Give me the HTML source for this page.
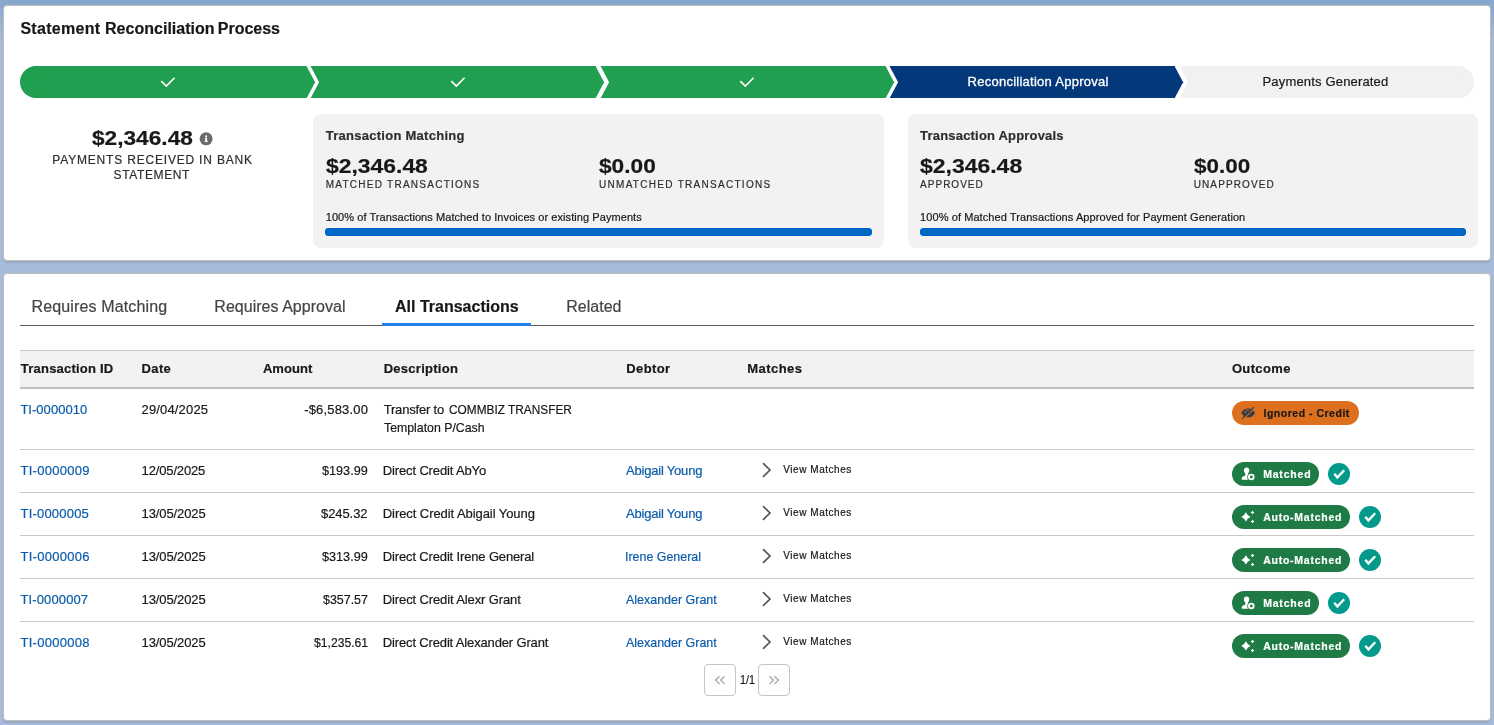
<!DOCTYPE html>
<html lang="en">
<head>
<meta charset="utf-8">
<title>Statement Reconciliation Process</title>
<style>
*{box-sizing:border-box;margin:0;padding:0}
html,body{width:1494px;height:725px;overflow:hidden}
body{font-family:"Liberation Sans",sans-serif;font-size:13px;color:#181818;background:linear-gradient(180deg,#86a6cd 0px,#a7bcdb 40px,#a7bcdb 100%);position:relative}
.card{position:absolute;left:3px;width:1488px;background:#fff;border:1px solid #bdbdbd;border-radius:4px;box-shadow:0 2px 2px 0 rgba(0,0,0,.1)}
.a{position:absolute}
.txt{position:absolute;left:0;top:0;width:1494px;height:725px;will-change:transform}
.x{position:absolute;white-space:nowrap;-webkit-text-stroke:.2px}
/* path */
.path{position:absolute;left:20px;top:66px;width:1454px;height:32px;display:flex}
.pi{position:relative;flex:1 1 0%;height:32px;margin-left:6px;margin-right:7px}
.pi:before,.pi:after{content:"";position:absolute;left:-4px;right:-5px;background:inherit}
.pi:before{top:0;height:17px;transform:skew(28deg)}
.pi:after{bottom:0;height:16px;transform:skew(-28deg)}
.pi:first-child{margin-left:0;padding-left:10px;border-radius:16px 0 0 16px}
.pi:first-child:before,.pi:first-child:after{left:18px}
.pi:last-child{margin-right:0;padding-right:10px;border-radius:0 16px 16px 0}
.pi:last-child:before,.pi:last-child:after{right:18px}
.pi.done{background:#219f50}
.pi.cur{background:#03387a}
.pi.todo{background:#f1f1f1}
.box{position:absolute;top:114px;height:134px;background:#f2f2f2;border-radius:8px}
.bar{position:absolute;top:228px;height:8px;border-radius:4px;background:#0069c8;box-shadow:inset 0 0 0 1px #0061c2,0 0 0 1px #fcf8f2}
.hl{position:absolute;left:20px;width:1454px;height:1px;background:#c9c9c9}
.badge{position:absolute;left:1232px;height:24px;border-radius:12px}
.ok{position:absolute;width:22px;height:22px;border-radius:11px;background:#049a8b}
.pg{position:absolute;top:664px;width:32px;height:32px;border:1px solid #c4c4c4;border-radius:4px;background:#fff}
svg{position:absolute;overflow:visible}
</style>
</head>
<body>

<div class="card" style="top:5px;height:256px"></div>
<div class="card" style="top:273px;height:448px"></div>

<!-- ============ process card ============ -->
<div class="path">
  <div class="pi done"></div><div class="pi done"></div><div class="pi done"></div><div class="pi cur"></div><div class="pi todo"></div>
</div>
<svg class="a" style="left:0;top:0" width="1494" height="110">
  <path d="M161.3 81.1 166.3 86.1 174.6 77.8M451.3 81.1 456.3 86.1 464.6 77.8M740.3 81.1 745.3 86.1 753.6 77.8" fill="none" stroke="#fff" stroke-width="1.6"/>
</svg>

<svg class="a" style="left:199px;top:132px" width="15" height="14" viewBox="0 0 15 14"><circle cx="7.1" cy="6.8" r="6.5" fill="#6b6b6b"/><circle cx="7.2" cy="4.2" r="1.05" fill="#fff"/><path d="M5.7 5.8H8.1V9.3H8.9V10.1H5.5V9.3H6.3V6.6H5.7Z" fill="#fff"/></svg>

<div class="box" style="left:313px;width:571px"></div>
<div class="box" style="left:908px;width:570px"></div>
<div class="bar" style="left:325px;width:547px"></div>
<div class="bar" style="left:920px;width:546px"></div>
<div class="txt">
<span class="x" style="left:20.4px;top:20px;font-size:16px;line-height:17px;color:#181818;font-weight:bold;letter-spacing:0.3px;">Statement</span>
<span class="x" style="left:105.0px;top:20px;font-size:16px;line-height:17px;color:#181818;font-weight:bold;letter-spacing:0.02px;">Reconciliation</span>
<span class="x" style="left:217.8px;top:20px;font-size:16px;line-height:17px;color:#181818;font-weight:bold;letter-spacing:-0.01px;">Process</span>
<span class="x" style="left:967.5px;top:74px;font-size:13px;line-height:15px;color:#fff;letter-spacing:0.26px;-webkit-text-stroke:.3px #fff;">Reconciliation Approval</span>
<span class="x" style="left:1262.5px;top:74px;font-size:13px;line-height:15px;color:#181818;letter-spacing:0.17px;">Payments Generated</span>
<span class="x" style="left:92.3px;top:126px;font-size:20.5px;line-height:23px;color:#181818;font-weight:bold;transform:scaleX(1.1058);transform-origin:0 0;">$2,346.48</span>
<span class="x" style="left:52.3px;top:153px;font-size:12px;line-height:14px;color:#2e2e2e;letter-spacing:0.81px;">PAYMENTS RECEIVED IN BANK</span>
<span class="x" style="left:113.6px;top:168px;font-size:12px;line-height:14px;color:#2e2e2e;letter-spacing:0.62px;">STATEMENT</span>
<span class="x" style="left:325.7px;top:128px;font-size:13px;line-height:15px;color:#2e2e2e;font-weight:bold;letter-spacing:0.27px;">Transaction Matching</span>
<span class="x" style="left:325.7px;top:154px;font-size:20.5px;line-height:23px;color:#181818;font-weight:bold;transform:scaleX(1.1168);transform-origin:0 0;">$2,346.48</span>
<span class="x" style="left:325.7px;top:179px;font-size:10px;line-height:11px;color:#2e2e2e;letter-spacing:1.26px;">MATCHED TRANSACTIONS</span>
<span class="x" style="left:599.0px;top:154px;font-size:20.5px;line-height:23px;color:#181818;font-weight:bold;transform:scaleX(1.1061);transform-origin:0 0;">$0.00</span>
<span class="x" style="left:599.0px;top:179px;font-size:10px;line-height:11px;color:#2e2e2e;letter-spacing:1.29px;">UNMATCHED TRANSACTIONS</span>
<span class="x" style="left:325.7px;top:211px;font-size:11px;line-height:12px;color:#181818;letter-spacing:0.07px;">100% of Transactions Matched to Invoices or existing Payments</span>
<span class="x" style="left:920.1px;top:128px;font-size:13px;line-height:15px;color:#2e2e2e;font-weight:bold;letter-spacing:0.19px;">Transaction Approvals</span>
<span class="x" style="left:920.1px;top:154px;font-size:20.5px;line-height:23px;color:#181818;font-weight:bold;transform:scaleX(1.1201);transform-origin:0 0;">$2,346.48</span>
<span class="x" style="left:920.1px;top:179px;font-size:10px;line-height:11px;color:#2e2e2e;letter-spacing:1.01px;">APPROVED</span>
<span class="x" style="left:1193.7px;top:154px;font-size:20.5px;line-height:23px;color:#181818;font-weight:bold;transform:scaleX(1.0943);transform-origin:0 0;">$0.00</span>
<span class="x" style="left:1193.7px;top:179px;font-size:10px;line-height:11px;color:#2e2e2e;letter-spacing:1.11px;">UNAPPROVED</span>
<span class="x" style="left:920.1px;top:211px;font-size:11px;line-height:12px;color:#181818;letter-spacing:0.08px;">100% of Matched Transactions Approved for Payment Generation</span>
</div>

<!-- ============ transactions card ============ -->
<div class="a" style="left:20px;top:325px;width:1454px;height:1px;background:#5c5c5c"></div>
<div class="a" style="left:382px;top:323px;width:149px;height:3px;background:#2680ed"></div>

<div class="a" style="left:20px;top:350px;width:1454px;height:39px;background:#f2f2f2;border-top:1px solid #c9c9c9;border-bottom:2px solid #c0c0c0"></div>
<div class="hl" style="top:449px"></div>
<div class="hl" style="top:492px"></div>
<div class="hl" style="top:535px"></div>
<div class="hl" style="top:578px"></div>
<div class="hl" style="top:621px"></div>

<div class="badge" style="top:401px;width:127px;background:#dd701f"></div>
<svg class="a" style="left:1241px;top:406px" width="15" height="14" viewBox="0 0 15 14"><path d="M0.2 6.7C2 3.7 4.5 2.5 7.2 2.5S12.3 3.8 14 6.9C12.3 10.1 9.9 11.3 7.2 11.3S2 10 0.2 6.7Z" fill="#333e48"/><path d="M4.2 7.2A2.8 2.8 0 0 1 7.8 4.2" fill="none" stroke="#dd701f" stroke-width="1"/><path d="M2.1 13.4 13.4 2.3" stroke="#dd701f" stroke-width="1.1"/><path d="M1.3 12.6 12.6 1.5" stroke="#333e48" stroke-width="1.2" stroke-linecap="round"/></svg>
<div class="badge" style="top:462px;width:87px;background:#1e7b45"></div>
<svg class="a" style="left:1241px;top:467px" width="15" height="14" viewBox="0 0 15 14"><path d="M5.6 0.6C7.3 0.6 8.3 1.9 8.3 3.5C8.3 4.9 7.6 6 6.9 6.5V7.3L8 7.9C7.2 8.6 6.7 9.6 6.7 10.7C6.7 11.5 6.9 12.2 7.3 12.8H0.8V11.3C0.8 10.4 1.3 9.9 2.2 9.5L4.3 8.5V6.5C3.6 6 2.9 4.9 2.9 3.5C2.9 1.9 3.9 0.6 5.6 0.6Z" fill="#fff"/><circle cx="10.3" cy="10" r="4" fill="#1e7b45"/><circle cx="10.3" cy="10" r="2.35" fill="none" stroke="#fff" stroke-width="1.9"/></svg>
<div class="ok" style="left:1328px;top:463px"></div>
<svg class="a" style="left:1328px;top:463px" width="22" height="22" viewBox="-11 -11 22 22"><path d="M-4.7-.3-1.6 3.4 5.2-3.8" fill="none" stroke="#fff" stroke-width="2.3"/></svg>
<svg class="a" style="left:762px;top:462px" width="10" height="16" viewBox="0 0 10 16"><path d="M1.5 1.6 8 8 1.5 14.4" fill="none" stroke="#505050" stroke-width="1.6" stroke-linecap="round"/></svg>
<div class="badge" style="top:505px;width:118px;background:#1e7b45"></div>
<svg class="a" style="left:0;top:0" width="1494" height="725"><path d="M1241.30 516.90Q1244.52 515.52 1245.90 512.30Q1247.28 515.52 1250.50 516.90Q1247.28 518.28 1245.90 521.50Q1244.52 518.28 1241.30 516.90ZM1250.50 512.50Q1252.00 512.00 1252.50 510.50Q1253.00 512.00 1254.50 512.50Q1253.00 513.00 1252.50 514.50Q1252.00 513.00 1250.50 512.50ZM1250.50 521.50Q1252.00 521.00 1252.50 519.50Q1253.00 521.00 1254.50 521.50Q1253.00 522.00 1252.50 523.50Q1252.00 522.00 1250.50 521.50Z" fill="#fff"/></svg>
<div class="ok" style="left:1359px;top:506px"></div>
<svg class="a" style="left:1359px;top:506px" width="22" height="22" viewBox="-11 -11 22 22"><path d="M-4.7-.3-1.6 3.4 5.2-3.8" fill="none" stroke="#fff" stroke-width="2.3"/></svg>
<svg class="a" style="left:762px;top:505px" width="10" height="16" viewBox="0 0 10 16"><path d="M1.5 1.6 8 8 1.5 14.4" fill="none" stroke="#505050" stroke-width="1.6" stroke-linecap="round"/></svg>
<div class="badge" style="top:548px;width:118px;background:#1e7b45"></div>
<svg class="a" style="left:0;top:0" width="1494" height="725"><path d="M1241.30 559.90Q1244.52 558.52 1245.90 555.30Q1247.28 558.52 1250.50 559.90Q1247.28 561.28 1245.90 564.50Q1244.52 561.28 1241.30 559.90ZM1250.50 555.50Q1252.00 555.00 1252.50 553.50Q1253.00 555.00 1254.50 555.50Q1253.00 556.00 1252.50 557.50Q1252.00 556.00 1250.50 555.50ZM1250.50 564.50Q1252.00 564.00 1252.50 562.50Q1253.00 564.00 1254.50 564.50Q1253.00 565.00 1252.50 566.50Q1252.00 565.00 1250.50 564.50Z" fill="#fff"/></svg>
<div class="ok" style="left:1359px;top:549px"></div>
<svg class="a" style="left:1359px;top:549px" width="22" height="22" viewBox="-11 -11 22 22"><path d="M-4.7-.3-1.6 3.4 5.2-3.8" fill="none" stroke="#fff" stroke-width="2.3"/></svg>
<svg class="a" style="left:762px;top:548px" width="10" height="16" viewBox="0 0 10 16"><path d="M1.5 1.6 8 8 1.5 14.4" fill="none" stroke="#505050" stroke-width="1.6" stroke-linecap="round"/></svg>
<div class="badge" style="top:591px;width:87px;background:#1e7b45"></div>
<svg class="a" style="left:1241px;top:596px" width="15" height="14" viewBox="0 0 15 14"><path d="M5.6 0.6C7.3 0.6 8.3 1.9 8.3 3.5C8.3 4.9 7.6 6 6.9 6.5V7.3L8 7.9C7.2 8.6 6.7 9.6 6.7 10.7C6.7 11.5 6.9 12.2 7.3 12.8H0.8V11.3C0.8 10.4 1.3 9.9 2.2 9.5L4.3 8.5V6.5C3.6 6 2.9 4.9 2.9 3.5C2.9 1.9 3.9 0.6 5.6 0.6Z" fill="#fff"/><circle cx="10.3" cy="10" r="4" fill="#1e7b45"/><circle cx="10.3" cy="10" r="2.35" fill="none" stroke="#fff" stroke-width="1.9"/></svg>
<div class="ok" style="left:1328px;top:592px"></div>
<svg class="a" style="left:1328px;top:592px" width="22" height="22" viewBox="-11 -11 22 22"><path d="M-4.7-.3-1.6 3.4 5.2-3.8" fill="none" stroke="#fff" stroke-width="2.3"/></svg>
<svg class="a" style="left:762px;top:591px" width="10" height="16" viewBox="0 0 10 16"><path d="M1.5 1.6 8 8 1.5 14.4" fill="none" stroke="#505050" stroke-width="1.6" stroke-linecap="round"/></svg>
<div class="badge" style="top:634px;width:118px;background:#1e7b45"></div>
<svg class="a" style="left:0;top:0" width="1494" height="725"><path d="M1241.30 645.90Q1244.52 644.52 1245.90 641.30Q1247.28 644.52 1250.50 645.90Q1247.28 647.28 1245.90 650.50Q1244.52 647.28 1241.30 645.90ZM1250.50 641.50Q1252.00 641.00 1252.50 639.50Q1253.00 641.00 1254.50 641.50Q1253.00 642.00 1252.50 643.50Q1252.00 642.00 1250.50 641.50ZM1250.50 650.50Q1252.00 650.00 1252.50 648.50Q1253.00 650.00 1254.50 650.50Q1253.00 651.00 1252.50 652.50Q1252.00 651.00 1250.50 650.50Z" fill="#fff"/></svg>
<div class="ok" style="left:1359px;top:635px"></div>
<svg class="a" style="left:1359px;top:635px" width="22" height="22" viewBox="-11 -11 22 22"><path d="M-4.7-.3-1.6 3.4 5.2-3.8" fill="none" stroke="#fff" stroke-width="2.3"/></svg>
<svg class="a" style="left:762px;top:634px" width="10" height="16" viewBox="0 0 10 16"><path d="M1.5 1.6 8 8 1.5 14.4" fill="none" stroke="#505050" stroke-width="1.6" stroke-linecap="round"/></svg>
<div class="txt">
<span class="x" style="left:31.5px;top:298px;font-size:16px;line-height:17px;color:#444;letter-spacing:0.14px;">Requires Matching</span>
<span class="x" style="left:214.3px;top:298px;font-size:16px;line-height:17px;color:#444;letter-spacing:0.03px;">Requires Approval</span>
<span class="x" style="left:395.0px;top:298px;font-size:16px;line-height:17px;color:#181818;font-weight:bold;">All Transactions</span>
<span class="x" style="left:566.3px;top:298px;font-size:16px;line-height:17px;color:#444;letter-spacing:0.01px;">Related</span>
<span class="x" style="left:20.8px;top:361px;font-size:13px;line-height:15px;color:#181818;font-weight:bold;letter-spacing:0.22px;">Transaction ID</span>
<span class="x" style="left:141.5px;top:361px;font-size:13px;line-height:15px;color:#181818;font-weight:bold;letter-spacing:0.38px;">Date</span>
<span class="x" style="left:262.9px;top:361px;font-size:13px;line-height:15px;color:#181818;font-weight:bold;letter-spacing:0.07px;">Amount</span>
<span class="x" style="left:383.7px;top:361px;font-size:13px;line-height:15px;color:#181818;font-weight:bold;letter-spacing:0.27px;">Description</span>
<span class="x" style="left:626.3px;top:361px;font-size:13px;line-height:15px;color:#181818;font-weight:bold;letter-spacing:0.37px;">Debtor</span>
<span class="x" style="left:747.2px;top:361px;font-size:13px;line-height:15px;color:#181818;font-weight:bold;letter-spacing:0.47px;">Matches</span>
<span class="x" style="left:1231.9px;top:361px;font-size:13px;line-height:15px;color:#181818;font-weight:bold;letter-spacing:0.36px;">Outcome</span>
<span class="x" style="left:20.4px;top:402px;font-size:13px;line-height:15px;color:#0b5cab;letter-spacing:0.03px;">TI-0000010</span>
<span class="x" style="left:141.5px;top:402px;font-size:13px;line-height:15px;color:#181818;letter-spacing:0.16px;">29/04/2025</span>
<span class="x" style="left:304.2px;top:402px;font-size:13px;line-height:15px;color:#181818;letter-spacing:0.17px;">-$6,583.00</span>
<span class="x" style="left:383.7px;top:402px;font-size:13px;line-height:15px;color:#181818;letter-spacing:-0.18px;">Transfer to</span>
<span class="x" style="left:448.6px;top:402px;font-size:13px;line-height:15px;color:#181818;transform:scaleX(0.9112);transform-origin:0 0;">COMMBIZ TRANSFER</span>
<span class="x" style="left:383.7px;top:420px;font-size:13px;line-height:15px;color:#181818;transform:scaleX(0.9472);transform-origin:0 0;">Templaton P/Cash</span>
<span class="x" style="left:1263.5px;top:407px;font-size:10.5px;line-height:12px;color:#181818;font-weight:bold;letter-spacing:0.51px;">Ignored - Credit</span>
<span class="x" style="left:20.5px;top:463px;font-size:13px;line-height:15px;color:#0b5cab;letter-spacing:0.27px;">TI-0000009</span>
<span class="x" style="left:141.6px;top:463px;font-size:13px;line-height:15px;color:#181818;letter-spacing:-0.15px;">12/05/2025</span>
<span class="x" style="left:321.8px;top:463px;font-size:13px;line-height:15px;color:#181818;transform:scaleX(0.973);transform-origin:0 0;">$193.99</span>
<span class="x" style="left:382.8px;top:463px;font-size:13px;line-height:15px;color:#181818;letter-spacing:-0.14px;">Direct Credit AbYo</span>
<span class="x" style="left:626.0px;top:463px;font-size:13px;line-height:15px;color:#0b5cab;letter-spacing:-0.2px;">Abigail Young</span>
<span class="x" style="left:783.3px;top:464px;font-size:10px;line-height:11px;color:#181818;letter-spacing:0.54px;">View Matches</span>
<span class="x" style="left:1263.2px;top:468px;font-size:10.5px;line-height:12px;color:#fff;font-weight:bold;letter-spacing:0.8px;">Matched</span>
<span class="x" style="left:20.5px;top:506px;font-size:13px;line-height:15px;color:#0b5cab;letter-spacing:0.2px;">TI-0000005</span>
<span class="x" style="left:141.6px;top:506px;font-size:13px;line-height:15px;color:#181818;letter-spacing:-0.11px;">13/05/2025</span>
<span class="x" style="left:321.0px;top:506px;font-size:13px;line-height:15px;color:#181818;letter-spacing:-0.08px;">$245.32</span>
<span class="x" style="left:382.8px;top:506px;font-size:13px;line-height:15px;color:#181818;letter-spacing:-0.07px;">Direct Credit Abigail Young</span>
<span class="x" style="left:626.0px;top:506px;font-size:13px;line-height:15px;color:#0b5cab;letter-spacing:-0.2px;">Abigail Young</span>
<span class="x" style="left:783.3px;top:507px;font-size:10px;line-height:11px;color:#181818;letter-spacing:0.54px;">View Matches</span>
<span class="x" style="left:1263.2px;top:511px;font-size:10.5px;line-height:12px;color:#fff;font-weight:bold;letter-spacing:0.75px;">Auto-Matched</span>
<span class="x" style="left:20.5px;top:549px;font-size:13px;line-height:15px;color:#0b5cab;letter-spacing:0.27px;">TI-0000006</span>
<span class="x" style="left:141.6px;top:549px;font-size:13px;line-height:15px;color:#181818;letter-spacing:-0.11px;">13/05/2025</span>
<span class="x" style="left:321.8px;top:549px;font-size:13px;line-height:15px;color:#181818;transform:scaleX(0.973);transform-origin:0 0;">$313.99</span>
<span class="x" style="left:382.8px;top:549px;font-size:13px;line-height:15px;color:#181818;letter-spacing:-0.15px;">Direct Credit Irene General</span>
<span class="x" style="left:625.0px;top:549px;font-size:13px;line-height:15px;color:#0b5cab;transform:scaleX(0.9554);transform-origin:0 0;">Irene General</span>
<span class="x" style="left:783.3px;top:550px;font-size:10px;line-height:11px;color:#181818;letter-spacing:0.54px;">View Matches</span>
<span class="x" style="left:1263.2px;top:554px;font-size:10.5px;line-height:12px;color:#fff;font-weight:bold;letter-spacing:0.75px;">Auto-Matched</span>
<span class="x" style="left:20.5px;top:592px;font-size:13px;line-height:15px;color:#0b5cab;letter-spacing:0.12px;">TI-0000007</span>
<span class="x" style="left:141.6px;top:592px;font-size:13px;line-height:15px;color:#181818;letter-spacing:-0.11px;">13/05/2025</span>
<span class="x" style="left:322.6px;top:592px;font-size:13px;line-height:15px;color:#181818;transform:scaleX(0.9559);transform-origin:0 0;">$357.57</span>
<span class="x" style="left:382.8px;top:592px;font-size:13px;line-height:15px;color:#181818;letter-spacing:-0.12px;">Direct Credit Alexr Grant</span>
<span class="x" style="left:626.0px;top:592px;font-size:13px;line-height:15px;color:#0b5cab;transform:scaleX(0.9584);transform-origin:0 0;">Alexander Grant</span>
<span class="x" style="left:783.3px;top:593px;font-size:10px;line-height:11px;color:#181818;letter-spacing:0.54px;">View Matches</span>
<span class="x" style="left:1263.2px;top:597px;font-size:10.5px;line-height:12px;color:#fff;font-weight:bold;letter-spacing:0.8px;">Matched</span>
<span class="x" style="left:20.5px;top:635px;font-size:13px;line-height:15px;color:#0b5cab;letter-spacing:0.27px;">TI-0000008</span>
<span class="x" style="left:141.6px;top:635px;font-size:13px;line-height:15px;color:#181818;letter-spacing:-0.11px;">13/05/2025</span>
<span class="x" style="left:313.5px;top:635px;font-size:13px;line-height:15px;color:#181818;transform:scaleX(0.934);transform-origin:0 0;">$1,235.61</span>
<span class="x" style="left:382.8px;top:635px;font-size:13px;line-height:15px;color:#181818;letter-spacing:-0.15px;">Direct Credit Alexander Grant</span>
<span class="x" style="left:626.0px;top:635px;font-size:13px;line-height:15px;color:#0b5cab;transform:scaleX(0.9584);transform-origin:0 0;">Alexander Grant</span>
<span class="x" style="left:783.3px;top:636px;font-size:10px;line-height:11px;color:#181818;letter-spacing:0.54px;">View Matches</span>
<span class="x" style="left:1263.2px;top:640px;font-size:10.5px;line-height:12px;color:#fff;font-weight:bold;letter-spacing:0.75px;">Auto-Matched</span>
<span class="x" style="left:739.5px;top:672px;font-size:13px;line-height:15px;color:#181818;transform:scaleX(0.8239);transform-origin:0 0;">1/1</span>
</div>

<div class="pg" style="left:704px"></div>
<div class="pg" style="left:758px"></div>
<svg class="a" style="left:0;top:0" width="1494" height="725">
  <path d="M719.6 676.2 715.6 680.1 719.6 684M724.6 676.2 720.6 680.1 724.6 684M769.4 676.2 773.4 680.1 769.4 684M774.4 676.2 778.4 680.1 774.4 684" fill="none" stroke="#b2b2b2" stroke-width="1.5"/>
</svg>

</body>
</html>
